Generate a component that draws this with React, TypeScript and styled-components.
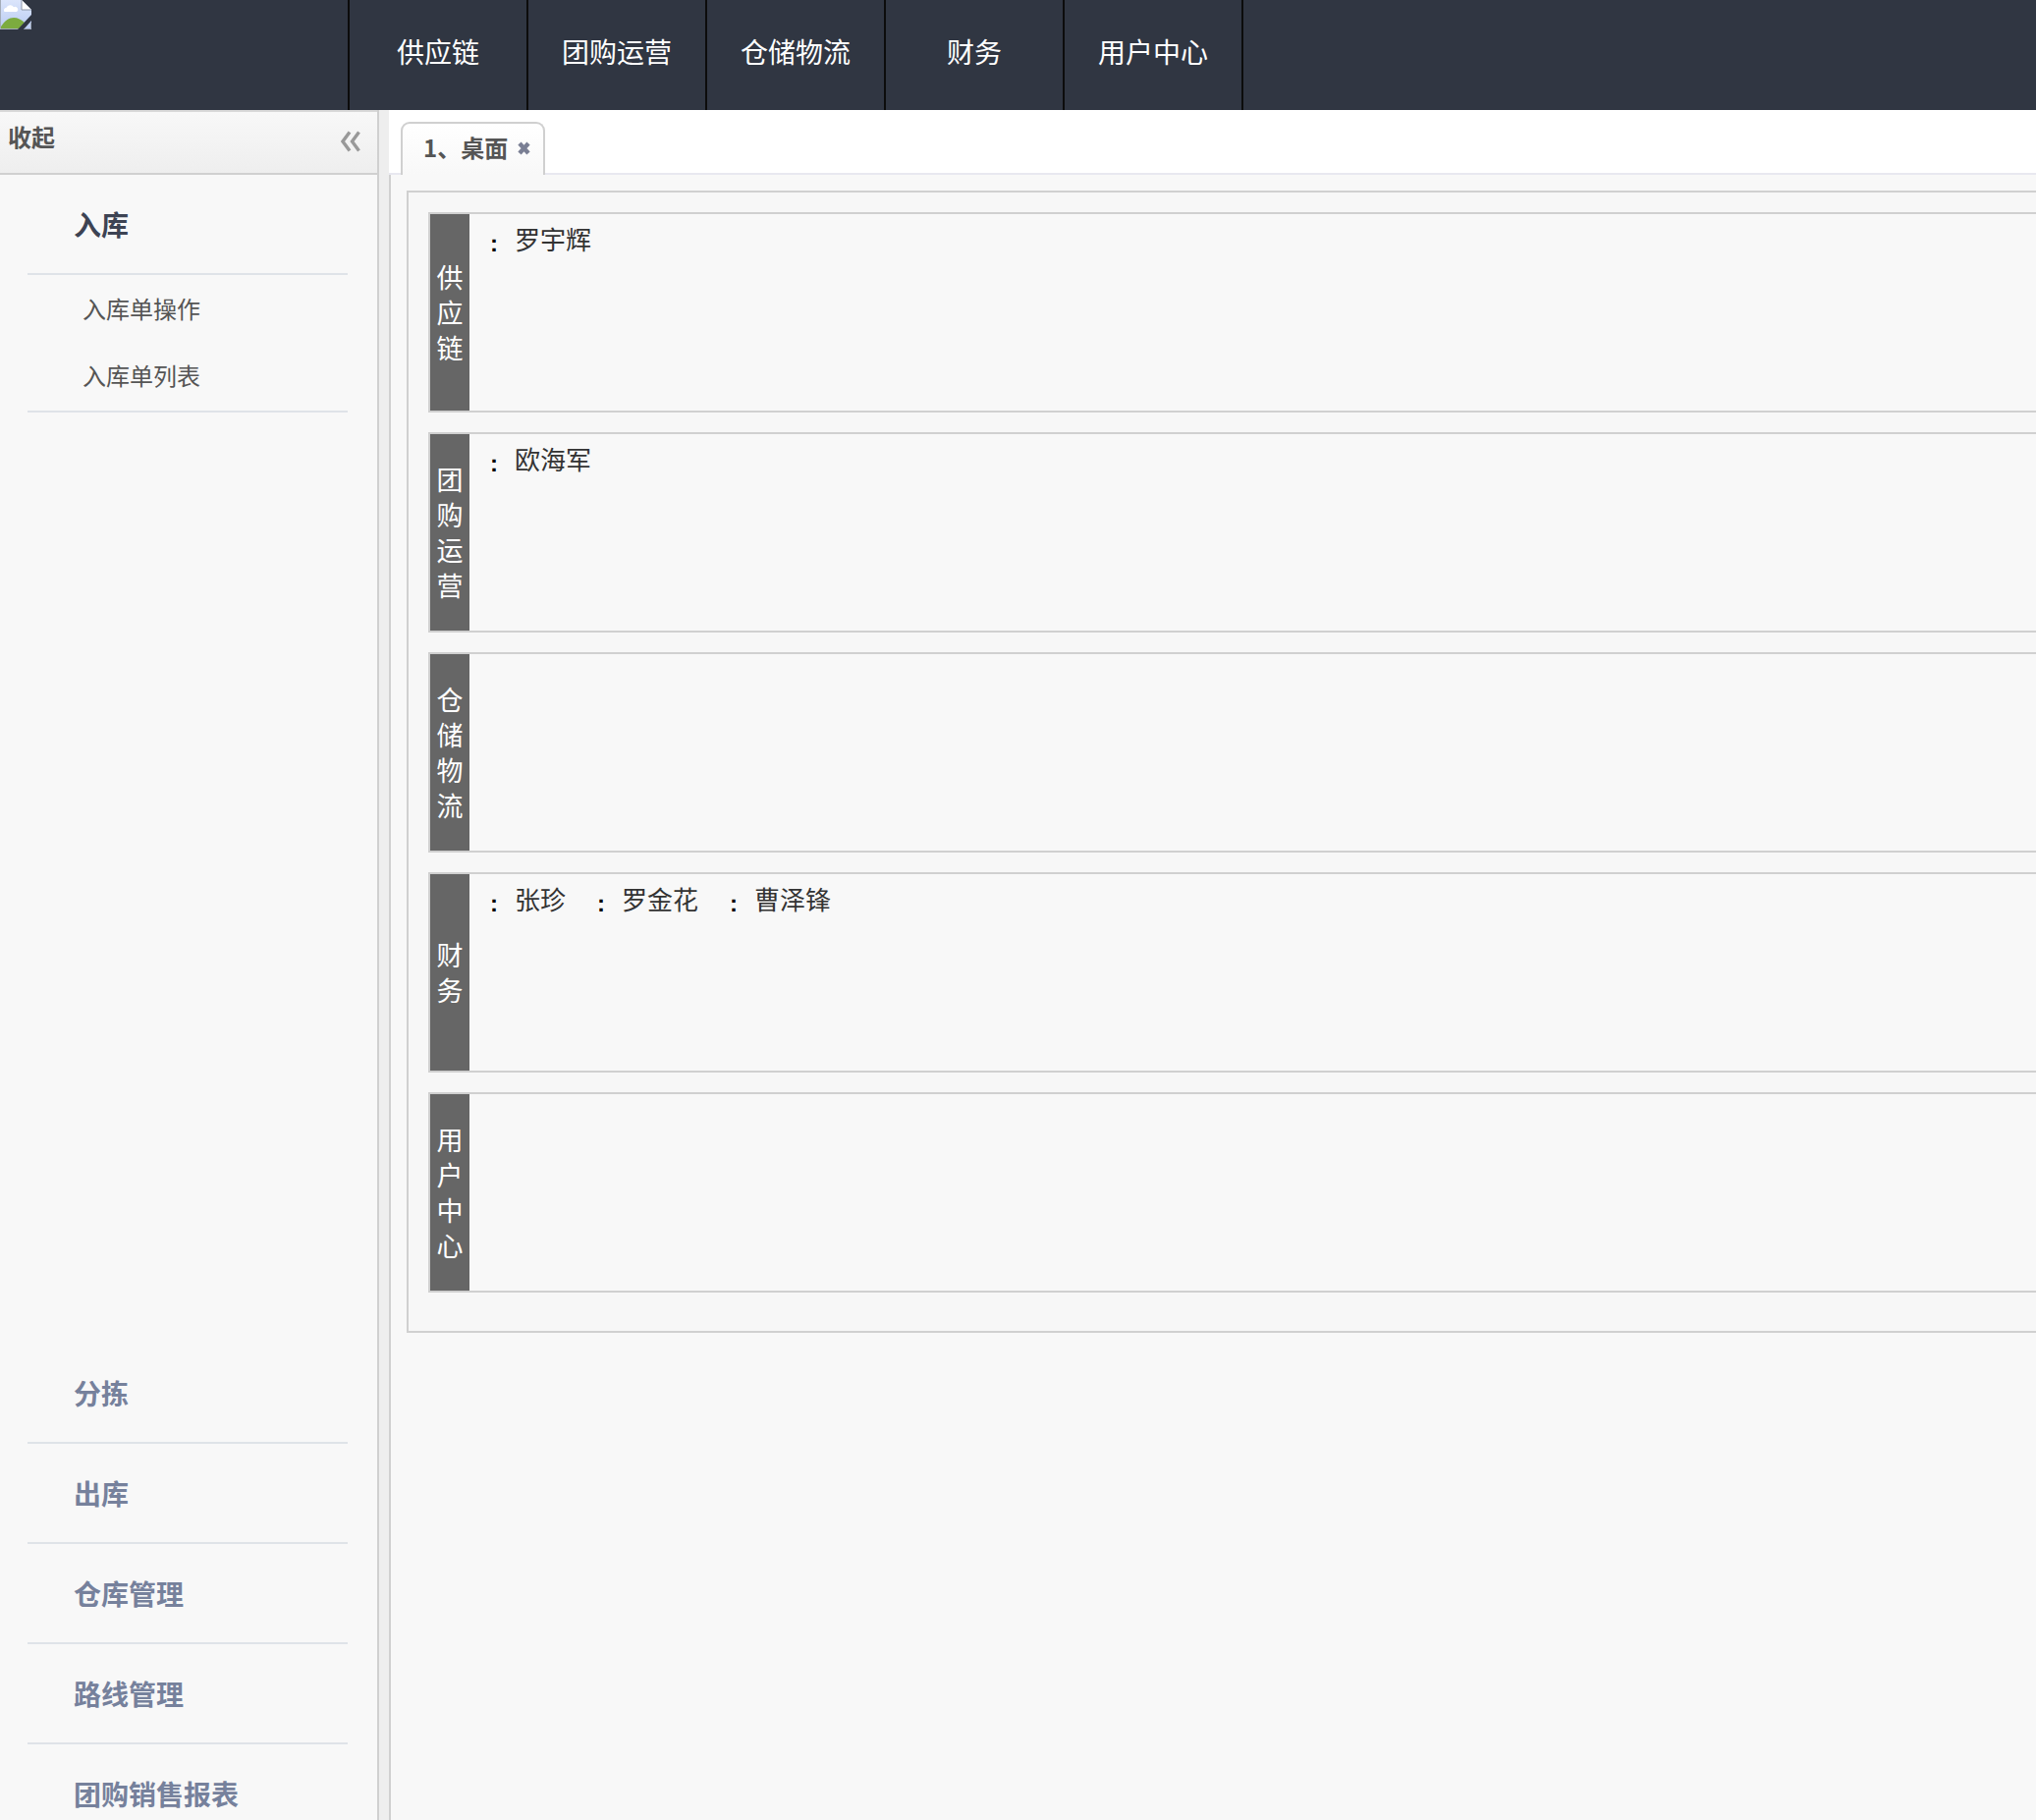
import {createGlobalStyle, styled} from 'styled-components'

const cjk = `"Noto Sans CJK SC", "Liberation Sans", sans-serif`

const GlobalStyle = createGlobalStyle`
  html, body {
    margin: 0;
    padding: 0;
    height: 100%;
    overflow: hidden;
    background: #f8f8f8;
  }
  * {
    box-sizing: border-box;
  }
`

const Page = styled.div`
  width: 2073px;
  height: 1853px;
  display: flex;
  flex-direction: column;
  overflow: hidden;
  font-family: ${cjk};
`

const TopBar = styled.header`
  flex: 0 0 112px;
  display: flex;
  background: #303642;
`

const LogoSlot = styled.div`
  flex: 0 0 354px;
  height: 30px;
  line-height: 0;
`

const TopNav = styled.nav`
  display: flex;
  border-left: 2px solid #0c0c0c;
`

const TopNavItem = styled.a`
  width: 182px;
  height: 112px;
  border-right: 2px solid #0c0c0c;
  color: #fff;
  font-size: 28px;
  line-height: 104px;
  text-align: center;
`

const Body = styled.div`
  flex: 1;
  display: flex;
  min-height: 0;
`

const Sidebar = styled.aside`
  flex: 0 0 386px;
  border-right: 2px solid #d0d0d0;
  background: #f8f8f8;
  overflow: hidden;
`

const CollapseBar = styled.div`
  height: 66px;
  display: flex;
  align-items: center;
  justify-content: space-between;
  padding: 0 17px 14px 8px;
  border-top: 2px solid #d8d8d8;
  border-bottom: 2px solid #d0d0d0;
  background: linear-gradient(#f8f8f8, #eeeeee);
  color: #555;
  font-size: 24px;
  font-weight: 700;

  svg {
    margin-top: 12px;
  }
`

const MenuGroup = styled.div`
  margin: 0 30px 0 28px;
`

const MenuTitle = styled.div<{$active?: boolean}>`
  height: 102px;
  padding-left: 47px;
  border-bottom: 2px solid #dfe3e8;
  color: ${({$active}) => ($active ? '#3d4353' : '#76819c')};
  font-size: 28px;
  font-weight: 700;
  line-height: 100px;
`

const SubMenu = styled.ul`
  list-style: none;
  margin: 0;
  padding: 0;
  height: 140px;
  border-bottom: 2px solid #dfe3e8;
`

const SubItem = styled.li`
  height: 68px;
  padding-left: 56px;
  color: #555;
  font-size: 24px;
  line-height: 68px;
`

const MenuSpacer = styled.div`
  height: 948px;
`

const Main = styled.main`
  flex: 1;
  min-width: 0;
  display: flex;
  flex-direction: column;
  margin-left: 10px;
  background: #f8f8f8;
  box-shadow: -10px 0 0 #eeeeee;
`

const TabBar = styled.div`
  flex: 0 0 66px;
  display: flex;
  align-items: flex-end;
  padding: 0 0 0 12px;
  background: #fff;
  border-bottom: 2px solid #e8e8f0;
`

const Tab = styled.div`
  width: 147px;
  height: 54px;
  margin-bottom: -2px;
  display: flex;
  align-items: center;
  padding: 0 0 6px 21px;
  border: 2px solid #d0d0d0;
  border-bottom: none;
  border-radius: 9px 9px 0 0;
  background: linear-gradient(#fff, #f8f8f8);
  color: #555;
  font-size: 24px;
  font-weight: 700;
  white-space: nowrap;

  svg {
    flex: none;
    margin: 4px 0 0 10px;
  }
`

const Content = styled.div`
  flex: 1;
  min-height: 0;
  border-left: 2px solid #d0d0d0;
  padding: 16px 0 0 16px;
  overflow: hidden;
`

const Board = styled.section`
  width: 2000px;
  padding: 20px 20px 19px;
  border: 2px solid #d0d0d0;
  background: #f7f7f7;
`

const DeptRow = styled.div`
  height: 204px;
  margin-bottom: 20px;
  display: flex;
  border: 2px solid #d0d0d0;
  background: #f8f8f8;
`

const DeptLabel = styled.div`
  flex: 0 0 40px;
  display: flex;
  align-items: center;
  justify-content: center;
  padding: 3px 6px 0;
  background: #666;
  color: #fff;
  font-family: "Liberation Serif", ${cjk};
  font-size: 27px;
  line-height: 36px;
  text-align: center;
`

const People = styled.div`
  display: flex;
  align-items: flex-start;
  gap: 31px;
  padding: 10px 0 0 20px;
`

const Person = styled.span`
  display: flex;
  align-items: baseline;
  color: #333;
  font-family: "Liberation Serif", ${cjk};
  font-size: 26px;
  line-height: 36px;
`

const Colon = styled.b`
  width: 26px;
  padding-left: 1px;
  transform: translateY(2px);
  font-family: "Liberation Sans", sans-serif;
  font-size: 24px;
  color: #000;
`

const CollapseIcon = () => (
  <svg width="20" height="22" viewBox="0 0 20 22" fill="none" stroke="#999" strokeWidth="3.4">
    <path d="M9 1.5 2 11l7 9.5" />
    <path d="M18.5 1.5 11.5 11l7 9.5" />
  </svg>
)

const CloseIcon = () => (
  <svg width="13" height="14" viewBox="0 0 13 14" stroke="#7a7f94" strokeWidth="4.4">
    <path d="M2 2l9 10M11 2 2 12" />
  </svg>
)

const BrokenImage = () => (
  <svg width="32" height="30" viewBox="0 0 32 30">
    <defs>
      <linearGradient id="sky" x1="0" y1="0" x2="0" y2="1">
        <stop offset="0" stopColor="#dbe5fb" />
        <stop offset="1" stopColor="#b9cbf2" />
      </linearGradient>
    </defs>
    <path d="M0 0H22L32 10V30H0Z" fill="url(#sky)" />
    <path d="M22 0V10H32Z" fill="#fff" />
    <path d="M22 0V10H32" fill="none" stroke="#8e97a8" strokeWidth="1" />
    <path d="M4.5 12a2.6 2.6 0 0 1 2-4.2 4.3 4.3 0 0 1 7.5-.6 2.6 2.6 0 0 1 2.8 4.8Z" fill="#fff" />
    <path d="M1 30V27C5 21 9 18 14 18 18 18 22 20 25 23L19 30Z" fill="#7cab3f" />
    <path d="M.5 0V29.5H19" fill="none" stroke="#a4acb8" strokeWidth="1" />
    <path d="M32 15V21L24 30H18Z" fill="#303642" />
    <path d="M25 29.5H31.5V23" stroke="#9aa3b2" strokeWidth="1" fill="none" />
  </svg>
)

const navItems = ['供应链', '团购运营', '仓储物流', '财务', '用户中心']
const closedMenus = ['分拣', '出库', '仓库管理', '路线管理', '团购销售报表']
const depts = [
  {name: '供应链', people: ['罗宇辉']},
  {name: '团购运营', people: ['欧海军']},
  {name: '仓储物流', people: []},
  {name: '财务', people: ['张珍', '罗金花', '曹泽锋']},
  {name: '用户中心', people: []},
]

export default function App() {
  return (
    <Page>
      <GlobalStyle />
      <TopBar>
        <LogoSlot>
          <BrokenImage />
        </LogoSlot>
        <TopNav>
          {navItems.map((item) => (
            <TopNavItem key={item}>{item}</TopNavItem>
          ))}
        </TopNav>
      </TopBar>
      <Body>
        <Sidebar>
          <CollapseBar>
            收起
            <CollapseIcon />
          </CollapseBar>
          <MenuGroup>
            <MenuTitle $active>入库</MenuTitle>
            <SubMenu>
              <SubItem>入库单操作</SubItem>
              <SubItem>入库单列表</SubItem>
            </SubMenu>
            <MenuSpacer />
            {closedMenus.map((item) => (
              <MenuTitle key={item}>{item}</MenuTitle>
            ))}
          </MenuGroup>
        </Sidebar>
        <Main>
          <TabBar>
            <Tab>
              1、桌面
              <CloseIcon />
            </Tab>
          </TabBar>
          <Content>
            <Board>
              {depts.map((dept) => (
                <DeptRow key={dept.name}>
                  <DeptLabel>{dept.name}</DeptLabel>
                  <People>
                    {dept.people.map((person) => (
                      <Person key={person}>
                        <Colon>:</Colon>
                        {person}
                      </Person>
                    ))}
                  </People>
                </DeptRow>
              ))}
            </Board>
          </Content>
        </Main>
      </Body>
    </Page>
  )
}
